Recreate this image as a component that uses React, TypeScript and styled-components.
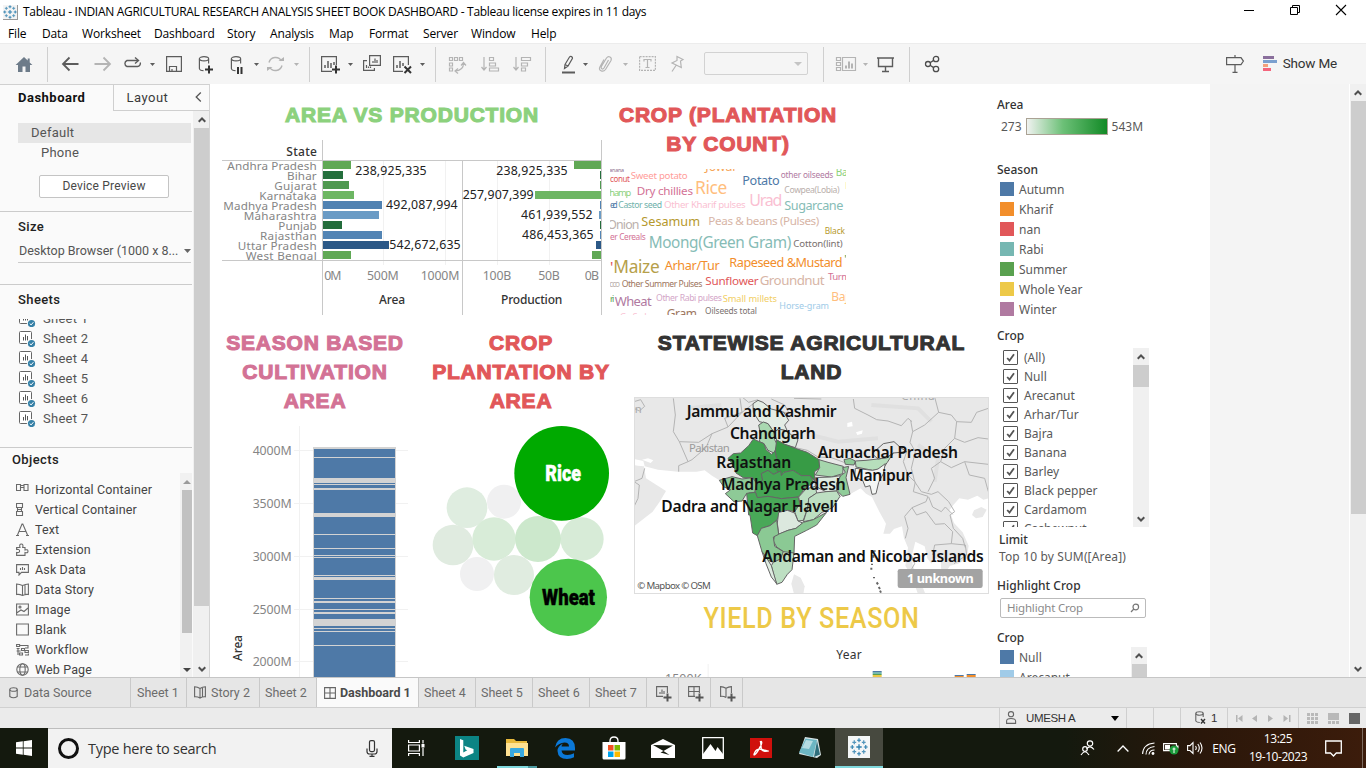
import React from "react";
import styled, { createGlobalStyle } from "styled-components";

const UI = '"Open Sans", "Noto Sans", sans-serif';
const BOOK = 'Roboto, "Liberation Sans", sans-serif';
const CHART = '"Noto Sans", "Open Sans", sans-serif';

const Global = createGlobalStyle`
  * { box-sizing: border-box; }
  body { margin: 0; background: #fff; overflow: hidden; }
  svg { display: block; flex: none; }
`;

const Window = styled.div`
  width: 1366px;
  height: 768px;
  display: flex;
  flex-direction: column;
  overflow: hidden;
  font-family: ${UI};
  font-size: 12px;
  color: #000;
  white-space: nowrap;
`;

/* ---------- title bar and menu ---------- */

const TitleBar = styled.header`
  height: 24px;
  display: flex;
  align-items: center;
  padding-left: 3px;
`;
const AppIcon = styled.div`
  width: 15px;
  height: 15px;
  margin-right: 5px;
  background: #f4f4f4;
  border-right: 1px solid #999;
  border-bottom: 1px solid #999;
`;
const TitleText = styled.div`
  flex: 1;
  line-height: 16px;
  letter-spacing: -0.29px;
`;
const Caption = styled.div`
  display: flex;
  gap: 34px;
  padding-right: 19px;
  margin-top: -4px;
`;
const MenuBar = styled.nav`
  height: 19px;
  padding-left: 8px;
  display: flex;
`;
const MenuItem = styled.span<{ $w: number }>`
  width: ${(p) => p.$w}px;
  line-height: 20px;
  letter-spacing: -0.15px;
`;

/* ---------- toolbar ---------- */

const ToolbarBox = styled.div`
  height: 41px;
  flex: none;
  display: flex;
  align-items: flex-start;
  background: #f5f5f5;
  border-top: 1px solid #ececec;
  padding-top: 10px;
`;
const Tool = styled.div<{ $gap: number; $w: number; $dim?: boolean }>`
  margin-left: ${(p) => p.$gap}px;
  width: ${(p) => p.$w}px;
  height: 20px;
  flex: none;
  color: ${(p) => (p.$dim ? "#b4b4b4" : "#5c5c5c")};
  svg { overflow: visible; fill: none; stroke: currentColor; stroke-width: 1.2; }
`;
const Separator = styled.div<{ $gap: number }>`
  width: 1px;
  height: 35px;
  margin: -7px 0 0 ${(p) => p.$gap}px;
  background: #cfcfcf;
  flex: none;
`;
const CaretDown = styled.i<{ $gap: number; $dim?: boolean }>`
  width: 5px;
  height: 3px;
  margin: 9px 0 0 ${(p) => p.$gap}px;
  background: ${(p) => (p.$dim ? "#b4b4b4" : "#5c5c5c")};
  clip-path: polygon(0 0, 100% 0, 50% 100%);
  flex: none;
`;
const FitSelect = styled.div`
  width: 104px;
  height: 23px;
  margin: -2px 0 0 20px;
  border: 1px solid #d2d2d2;
  border-radius: 2px;
  display: flex;
  justify-content: flex-end;
  padding: 9px 5px 0 0;
  flex: none;
`;
const SelectCaret = styled.i`
  width: 8px;
  height: 4px;
  background: #c4c4c4;
  clip-path: polygon(0 0, 100% 0, 50% 100%);
`;
const Filler = styled.div`flex: 1;`;
const ShowMe = styled.div`
  display: flex;
  gap: 6px;
  margin: 0 29px 0 19px;
  font: 400 13.5px/19px ${BOOK};
  letter-spacing: -0.2px;
  color: #333;
`;

/* ---------- main area ---------- */

const Main = styled.main`
  height: 593px;
  flex: none;
  display: flex;
  overflow: hidden;
`;
const Sidebar = styled.aside`
  width: 210px;
  flex: none;
  display: flex;
  flex-direction: column;
  background: #fafafa;
  border-top: 1px solid #d0d0d0;
  border-right: 1px solid #d4d4d4;
  font-family: ${BOOK};
  color: #555;
`;
const PaneTabs = styled.div`
  height: 26px;
  flex: none;
  display: flex;
`;
const PaneTab = styled.div<{ $active?: boolean }>`
  width: ${(p) => (p.$active ? 114 : 96)}px;
  padding-left: ${(p) => (p.$active ? 18 : 12)}px;
  border-left: ${(p) => (p.$active ? 0 : 1)}px solid #cfcfcf;
  border-bottom: ${(p) => (p.$active ? 0 : 1)}px solid #cfcfcf;
  font-size: 13px;
  line-height: 25px;
  letter-spacing: 0.5px;
  font-weight: ${(p) => (p.$active ? 700 : 400)};
  color: ${(p) => (p.$active ? "#111" : "#3a3a3a")};
  display: flex;
  justify-content: space-between;
  padding-right: 7px;
`;
const PaneBody = styled.div`
  flex: 1;
  min-height: 0;
  display: flex;
  justify-content: space-between;
`;
const PaneContent = styled.div`
  width: 192px;
  height: 566px;
  overflow: hidden;
`;
const Section = styled.section<{ $h: number; $pad?: number }>`
  height: ${(p) => p.$h}px;
  padding-top: ${(p) => p.$pad || 0}px;
  border-bottom: 1px solid #cbcbcb;
  overflow: hidden;
`;
const DeviceRow = styled.div<{ $selected?: boolean }>`
  height: 20px;
  margin: 0 1px 0 18px;
  padding-left: ${(p) => (p.$selected ? 13 : 23)}px;
  font-size: 13px;
  line-height: 20px;
  letter-spacing: 0.25px;
  background: ${(p) => (p.$selected ? "#e6e6e6" : "none")};
`;
const PreviewButton = styled.button`
  display: block;
  width: 130px;
  height: 23px;
  margin: 12px 0 0 39px;
  padding: 0;
  background: #fff;
  border: 1px solid #c4c4c4;
  border-radius: 2px;
  font: 400 12px/19px ${BOOK};
  letter-spacing: 0.2px;
  color: #484848;
`;
const PaneHeading = styled.h3<{ $x: number; $top: number }>`
  margin: 0;
  padding: ${(p) => p.$top}px 0 0 ${(p) => p.$x}px;
  font: 500 13px/18px ${BOOK};
  letter-spacing: 0.4px;
  color: #222;
`;
const SizeSelect = styled.div`
  height: 22px;
  margin: 5px 1px 0 18px;
  padding-left: 1px;
  border-bottom: 1px solid #cbcbcb;
  display: flex;
  font-size: 12.5px;
  line-height: 20px;
`;
const SizeCaret = styled.i`
  width: 7px;
  height: 4px;
  margin: 8px 0 0 auto;
  background: #666;
  clip-path: polygon(0 0, 100% 0, 50% 100%);
`;
const ScrollList = styled.div<{ $h: number; $shift: number }>`
  height: ${(p) => p.$h}px;
  margin-top: 10px;
  overflow: hidden;
  & > :first-child { margin-top: -${(p) => p.$shift}px; }
`;
const SheetRow = styled.div`
  height: 20px;
  padding-left: 19px;
  display: flex;
  gap: 7px;
  font-size: 13px;
  line-height: 20px;
  letter-spacing: 0.25px;
`;
const ObjectsArea = styled.div`
  display: flex;
  justify-content: space-between;
  height: 205px;
  margin-top: 4px;
`;
const ObjectList = styled.div`padding-top: 6px;`;
const ObjectRow = styled.div`
  height: 20px;
  display: flex;
  gap: 6px;
  padding-left: 16px;
  align-items: center;
  font-size: 12.5px;
  letter-spacing: 0.14px;
  color: #444;
  svg { fill: none; stroke: #6a6a6a; stroke-width: 1.1; }
`;
const Track = styled.div<{ $w: number; $h?: number; $bg?: string }>`
  width: ${(p) => p.$w}px;
  height: ${(p) => (p.$h ? p.$h + "px" : "auto")};
  background: ${(p) => p.$bg || "#f1f1f1"};
  display: flex;
  flex-direction: column;
  align-items: flex-end;
  flex: none;
`;
const Thumb = styled.div<{ $w: number; $h: number; $c?: string }>`
  width: ${(p) => p.$w}px;
  height: ${(p) => p.$h}px;
  background: ${(p) => p.$c || "#cdcdcd"};
`;
const ArrowBox = styled.div<{ $w: number; $h: number; $bottom?: boolean }>`
  width: ${(p) => p.$w}px;
  height: ${(p) => p.$h}px;
  margin-top: ${(p) => (p.$bottom ? "auto" : 0)};
  display: flex;
  align-items: center;
  justify-content: center;
`;

/* ---------- dashboard ---------- */

const Canvas = styled.div`
  width: 1000px;
  flex: none;
  background: #fff;
  display: flex;
`;
const Zones = styled.div`
  width: 779px;
  padding-left: 12px;
  flex: none;
`;
const ZoneRow = styled.div<{ $top: number; $gap: number; $h: number }>`
  display: flex;
  gap: ${(p) => p.$gap}px;
  padding-top: ${(p) => p.$top}px;
  height: ${(p) => p.$h}px;
`;
const Zone = styled.section<{ $w: number; $lead?: number }>`
  width: ${(p) => p.$w}px;
  flex: none;
  svg { margin-top: ${(p) => p.$lead ?? 11}px; }
`;
const ZoneTitle = styled.h2<{ $c: string }>`
  margin: 0 -10px;
  text-align: center;
  font: 700 21px/29px "Liberation Sans", Arial, sans-serif;
  letter-spacing: 0.8px;
  -webkit-text-stroke: 1.1px ${(p) => p.$c};
  color: ${(p) => p.$c};
`;
const YieldTitle = styled.h2`
  margin: 9px 0 0;
  text-align: center;
  font: 500 29px/31px Roboto, sans-serif;
  letter-spacing: 0.7px;
  color: #edc948;
  transform: scaleX(0.87);
`;
const Legend = styled.aside`
  width: 153px;
  margin-left: 8px;
  font-family: ${CHART};
  font-size: 12px;
  color: #595959;
`;
const LegendHeading = styled.h4<{ $top: number; $x?: number }>`
  margin: ${(p) => p.$top}px 0 0 ${(p) => p.$x || 0}px;
  font: 500 12px/16px ${CHART};
  color: #333;
`;
const Ramp = styled.div`
  display: flex;
  gap: 4px;
  height: 17px;
  margin: 5px 0 0 4px;
  line-height: 17px;
`;
const RampBar = styled.div`
  width: 82px;
  border: 1px solid #aaa294;
  background: linear-gradient(90deg, #f0f2f0, #6cc077 45%, #128a26);
`;
const SwatchRow = styled.div`
  height: 20px;
  display: flex;
  gap: 5px;
  padding: 3px 0 0 3px;
  line-height: 16px;
`;
const Swatch = styled.i<{ $c: string }>`
  width: 14px;
  height: 14px;
  background: ${(p) => p.$c};
`;
const FilterBox = styled.div<{ $h: number; $top: number; $w: number }>`
  width: ${(p) => p.$w}px;
  height: ${(p) => p.$h}px;
  margin-top: ${(p) => p.$top}px;
  display: flex;
  justify-content: space-between;
  overflow: hidden;
`;
const FilterList = styled.div``;
const CheckRow = styled.label`
  display: flex;
  height: 19px;
  gap: 6px;
  padding: 2px 0 0 6px;
  line-height: 16px;
`;
const CheckBox = styled.i`
  width: 15px;
  height: 15px;
  border: 1px solid #555;
  border-radius: 1px;
`;
const LimitText = styled.div`
  margin: 1px 0 0 2px;
  line-height: 16px;
  letter-spacing: 0.14px;
`;
const SearchField = styled.div`
  width: 146px;
  height: 20px;
  margin: 4px 0 0 3px;
  padding: 0 5px 0 6px;
  border: 1px solid #bbb;
  border-radius: 2px;
  display: flex;
  align-items: center;
  justify-content: space-between;
  font: 400 11.5px/18px ${CHART};
  color: #8a8a8a;
  letter-spacing: -0.2px;
`;
const Beyond = styled.div`
  flex: 1;
  background: #f4f4f4;
  border-right: 1px solid #fff;
`;

/* ---------- sheet tabs and status ---------- */

const SheetTabs = styled.div`
  height: 31px;
  flex: none;
  display: flex;
  background: #e6e6e6;
  border-top: 1px solid #c6c6c6;
  border-bottom: 1px solid #d0d0d0;
`;
const SheetTab = styled.div<{ $w: number; $pad: number; $active?: boolean }>`
  width: ${(p) => p.$w}px;
  padding-left: ${(p) => p.$pad}px;
  border-right: 1px solid #c9c9c9;
  background: ${(p) => (p.$active ? "#fafafa" : "none")};
  font: ${(p) => (p.$active ? 700 : 400)} 12.5px/29px ${BOOK};
  color: ${(p) => (p.$active ? "#4a4a4a" : "#6c6c6c")};
  display: flex;
  gap: ${(p) => (p.$active ? 4 : 5)}px;
  align-items: center;
  svg { overflow: visible; fill: none; stroke: #666; stroke-width: 1.1; }
`;
const StatusBar = styled.div`
  height: 20px;
  flex: none;
  display: flex;
  justify-content: flex-end;
  background: #ebebeb;
`;
const StatusCell = styled.div<{ $w: number; $pad?: number }>`
  width: ${(p) => p.$w}px;
  padding-left: ${(p) => p.$pad || 0}px;
  border-left: 1px solid #cfcfcf;
  display: flex;
  align-items: center;
  font: 400 11.5px/20px "Liberation Sans", sans-serif;
  letter-spacing: -0.35px;
  color: #333;
`;
const StatusCaret = styled.i`
  border: 4px solid transparent;
  border-top: 5px solid #000;
  border-bottom: 0;
  margin: 1px 0 0 36px;
`;

/* ---------- taskbar ---------- */

const Taskbar = styled.footer`
  height: 40px;
  flex: none;
  display: flex;
  background: linear-gradient(90deg, #14190e 0, #14190e 78%, #2a170a 88%, #3c1c0b 100%);
  color: #fff;
`;
const StartButton = styled.div`
  width: 48px;
  display: flex;
  align-items: center;
  justify-content: center;
`;
const SearchBox = styled.div`
  width: 344px;
  background: #f2f2f2;
  border-top: 1px solid #bdbdbd;
  display: flex;
  align-items: center;
  padding: 0 14px 0 10px;
  font: 400 14.5px/38px ${UI};
  letter-spacing: -0.27px;
  color: #333;
`;
const SearchRing = styled.i`
  width: 21px;
  height: 21px;
  border: 3px solid #111;
  border-radius: 50%;
  margin: 0 9px 0 0;
`;
const TaskButton = styled.div<{ $w: number; $active?: boolean }>`
  width: ${(p) => p.$w}px;
  display: flex;
  align-items: center;
  justify-content: center;
  background: ${(p) => (p.$active ? "#47493f" : "none")};
  border-bottom: ${(p) => (p.$active ? "2px solid #7fd8dc" : "0")};
`;
const RunningButton = styled(TaskButton)`
  background: linear-gradient(90deg, #7fd8dc 31px, #4c9aa0 31px) 3px 38px / 40px 2px no-repeat;
`;
const Tray = styled.div`
  margin-left: auto;
  display: flex;
  align-items: center;
`;
const TrayItem = styled.div<{ $w: number }>`
  width: ${(p) => p.$w}px;
  display: flex;
  justify-content: center;
`;
const Lang = styled.div`
  width: 28px;
  font-size: 12px;
  text-align: center;
  letter-spacing: -0.3px;
`;
const Clock = styled.div`
  width: 80px;
  text-align: center;
  font-size: 12px;
  line-height: 18px;
  letter-spacing: -0.45px;
`;
const PeekEdge = styled.div`
  width: 4px;
  height: 40px;
  border-left: 1px solid #7c6a5f;
`;

/* ---------- small drawings ---------- */

type Plus = [number, number, number, number];
const pluses: Plus[] = [
  [8, 8, 2.4, 1.2], [8, 2, 1.7, 1], [8, 14, 1.7, 1], [2, 8, 1.7, 1], [14, 8, 1.7, 1],
  [3.8, 3.8, 1.7, 1.1], [12.2, 3.8, 1.7, 1.1], [3.8, 12.2, 1.7, 1.1], [12.2, 12.2, 1.7, 1.1],
];
const TableauMark = ({ size, color }: { size: number; color: string }) => (
  <svg width={size} height={size} viewBox="0 0 16 16" stroke={color}>
    {pluses.map(([x, y, r, w], i) => (
      <path key={i} strokeWidth={w} opacity={i > 4 ? 0.8 : 1} d={`M${x - r} ${y}H${x + r}M${x} ${y - r}V${y + r}`} />
    ))}
  </svg>
);

const Chevron = ({ dir, size = 9 }: { dir: "up" | "down"; size?: number }) => (
  <svg width={size} height={size} viewBox="0 0 9 9" fill="none" stroke="#505050" strokeWidth="2.2">
    <path d={dir === "up" ? "M.8 6.500 4.500 2.800 8.200 6.500" : "M.8 2.500 4.500 6.200 8.200 2.500"} />
  </svg>
);

const SheetIcon = () => (
  <svg width="17" height="18" viewBox="0 0 17 18">
    <rect x=".5" y="2.5" width="12" height="12" rx="1" fill="#fff" stroke="#666" />
    <path d="M4.500 11.500V8M6.500 11.500V5.500M8.500 11.500V7" stroke="#555" />
    <circle cx="12.500" cy="14.500" r="4.600" fill="#fafafa" />
    <circle cx="12.500" cy="14.500" r="3.600" fill="#3580a6" />
    <path d="m10.700 14.500 1.400 1.400 2.300-2.700" fill="none" stroke="#fff" />
  </svg>
);

const Svg = ({ w, h = 20, children }: { w: number; h?: number; children: React.ReactNode }) => (
  <svg width={w} height={h} viewBox={`0 0 ${w} ${h}`}>{children}</svg>
);

const Cylinder = () => (
  <>
    <ellipse cx="6" cy="4.700" rx="4.600" ry="2.100" />
    <path d="M1.400 4.700V14.500Q1.600 16.500 5.500 16.700M10.600 4.700V9.500" />
  </>
);

const Toolbar = () => (
  <ToolbarBox>
    <Tool $gap={15} $w={18}>
      <Svg w={18}><path fill="#6d7b89" stroke="none" d="M9 3 .6 11H3v7h4.500v-5.500h3V18H15v-7h2.400l-2.700-2.600V4.500h-2v2z" /></Svg>
    </Tool>
    <Separator $gap={14} />
    <Tool $gap={14} $w={17}><Svg w={17}><path strokeWidth="1.800" d="M7.500 3.500 1 10l6.500 6.500M1 10h15.500" /></Svg></Tool>
    <Tool $gap={15} $w={17} $dim><Svg w={17}><path strokeWidth="1.800" d="M9.500 3.500 16 10l-6.500 6.500M16 10H.5" /></Svg></Tool>
    <Tool $gap={12} $w={18}>
      <Svg w={18}><path strokeWidth="1.400" d="M15 6.500H4A3.200 3.200 0 0 0 4 12.500H14.500A3 3 0 0 0 17.200 8.500" /><path d="m12 3.500 3.500 3-3.500 3" strokeWidth="1.400" /></Svg>
    </Tool>
    <CaretDown $gap={9} />
    <Tool $gap={11} $w={16}><Svg w={16}><path d="M.6 2.600H15.400V17.400H.6zM3.500 17.400V12.500H10.500V17.400M6 17.400V15" /></Svg></Tool>
    <Tool $gap={16} $w={15}><Svg w={15}><Cylinder /><path d="M11 11.500v8M7 15.500h8" strokeWidth="2" stroke="#333" /></Svg></Tool>
    <Tool $gap={17} $w={13}><Svg w={13}><Cylinder /><path d="M8 13v7M11.500 13v7" strokeWidth="2" stroke="#333" /></Svg></Tool>
    <CaretDown $gap={11} />
    <Tool $gap={8} $w={17} $dim>
      <Svg w={17}><path strokeWidth="1.400" d="M2 8.500A6.800 6.800 0 0 1 14.500 7M15 11.500A6.800 6.800 0 0 1 2.500 13" /><path fill="currentColor" stroke="none" d="M11.500 7h5.500V3zM5.500 13H0v4z" /></Svg>
    </Tool>
    <CaretDown $gap={10} $dim />
    <Separator $gap={10} />
    <Tool $gap={11} $w={19}>
      <Svg w={19}><path d="M11 17.400H.6V2.600H15.400V11" /><path strokeWidth="1.500" d="M4 14v-3M7 14V7M10 14V9M13 11V8" /><path d="M15 11.500v8M11 15.500h8" strokeWidth="2" stroke="#333" /></Svg>
    </Tool>
    <CaretDown $gap={8} />
    <Tool $gap={10} $w={18}>
      <Svg w={18}><path d="M6.600 1.600H17.400V11.400H6.600zM4 6.600H.6V16.400H11.400V14M10 9V7M12 9V4.500M14 9V6M3.500 14v-3M5.500 14v-1.500M7.500 14v-1.500" /></Svg>
    </Tool>
    <Tool $gap={12} $w={19}>
      <Svg w={19}><path d="M10 17.400H.6V2.600H15.400V11" /><path strokeWidth="1.500" d="M4 14v-3M7 14V7M10 12V9" /><path d="m11.500 12.500 6.500 6.500M18 12.500l-6.500 6.500" strokeWidth="2" stroke="#333" /></Svg>
    </Tool>
    <CaretDown $gap={8} />
    <Separator $gap={10} />
    <Tool $gap={13} $w={16} $dim>
      <Svg w={16}><path d="M.5 3.500h3v3h-3zM5.500 3.500h3v3h-3zM10.500 3.500h3v3h-3zM.5 9h3v3h-3zM.5 14h3v3h-3zM14.500 9.500q0 7-8.500 7.500M12 11.500l2.500-3 2.500 3M9 14.500l-3 2.500 3 2.500" /></Svg>
    </Tool>
    <Tool $gap={16} $w={18} $dim><Svg w={18}><path d="M3 3v13M.5 13 3 16l2.500-3M8.500 3.500h4v3h-4zM8.500 9h6v3h-6zM8.500 14h9v3h-9z" /></Svg></Tool>
    <Tool $gap={14} $w={18} $dim><Svg w={18}><path d="M3 3v13M.5 13 3 16l2.500-3M8.500 3.500h9v3h-9zM8.500 9h6v3h-6zM8.500 14h4v3h-4z" /></Svg></Tool>
    <Separator $gap={14} />
    <Tool $gap={16} $w={13}>
      <Svg w={13}><path d="M3 10.500 7.500 3q.8-1 2-.4t1 1.800L6 12l-3.500 2.500zM3 10.500 6 12" /><path d="M0 18.500h13" strokeWidth="2" /></Svg>
    </Tool>
    <CaretDown $gap={8} />
    <Tool $gap={11} $w={13} $dim>
      <Svg w={13}><path d="M9.500 6 5 14q-1 1.500-2.200.8t-.4-2.300L7.500 4q1.500-2 3.500-1t1 3.500L6.500 15.500q-2 2.500-4.500 1.200t-1-4L5 5.500" /></Svg>
    </Tool>
    <CaretDown $gap={11} $dim />
    <Tool $gap={11} $w={17} $dim>
      <Svg w={17}><path strokeDasharray="2 1" d="M.6 2.600H16.400V16.400H.6z" /><path d="M5 7.500v-2h7v2M8.500 5.500v8M6.500 13.500h4" /></Svg>
    </Tool>
    <Tool $gap={15} $w={13} $dim>
      <Svg w={13}><path d="M6 2.500 12 5.500 9.500 7l.8 6.500L1 9l5-2.500zM5 11.500l-4 6" /></Svg>
    </Tool>
    <FitSelect><SelectCaret /></FitSelect>
    <Separator $gap={15} />
    <Tool $gap={12} $w={20} $dim>
      <Svg w={20}><path d="M.5 3.500h4v3h-4zM.5 8.500h4v3h-4zM.5 13.500h4v3h-4zM6.500 3.500h13v13h-13z" /><path d="M10 14.500v-3M13 14.500v-7M16 14.500v-5" strokeWidth="2" /></Svg>
    </Tool>
    <CaretDown $gap={7} $dim />
    <Tool $gap={9} $w={17}><Svg w={17}><path strokeWidth="1.400" d="M0 4h17M1.500 4v8.500h14V4M8.500 12.500v5M5 17.500h7" /></Svg></Tool>
    <Separator $gap={15} />
    <Tool $gap={15} $w={15}>
      <Svg w={15}><g strokeWidth="1.300" stroke="#4c4c4c"><circle cx="3" cy="10" r="2.500" /><circle cx="11" cy="5" r="2.700" /><circle cx="11" cy="15" r="2.700" /><path d="m5 8.700 3.700-2.300M5 11.300l3.700 2.300" /></g></Svg>
    </Tool>
    <Filler />
    <Tool $gap={0} $w={18}>
      <Svg w={18}><path d="M.6 3.600H15l2.400 3.500L15 10.600H.6zM9 1v2.500M9 10.500V18M6.500 18.400h5" /></Svg>
    </Tool>
    <ShowMe>
      <Svg w={14}><path fill="#8a6f9c" d="M0 2h11v3H0z" /><path fill="#7ba0cf" d="M0 6h14v3H0z" /><path fill="#f3a17c" d="M0 10h5v3H0z" /><path fill="#f4657c" d="M0 14h8v3H0z" /></Svg>
      Show Me
    </ShowMe>
  </ToolbarBox>
);

/* ---------- sidebar ---------- */

const objects: [string, React.ReactNode][] = [
  ["Horizontal Container", <path d="M.5 1.500h4v6h-4zM8 1.500h4v6H8zM4.500 2.500h3.500M4.500 4.500h3.500" />],
  ["Vertical Container", <path d="M.5.500h6v4h-6zM.5 8.500h6v4h-6zM1.500 4.500v4M5.500 4.500v4M1.500 6.500h4" />],
  ["Text", <path d="M1.500 12 6 1h.8L11.500 12M3 8.500h7M0 12.500h3M10 12.500h3" />],
  ["Extension", <path d="M.6 12.400V9.500q3 .5 3-1.500t-3-1.500V4.500H4Q3 1 5.300 1T6.700 4.500H9V7q3-1 3 1.200T9 9.500v2.900z" />],
  ["Ask Data", <><path d="M.6 1.600H12.400V9.400H5.500L3 12V9.400H.6z" /><path d="M4.500 7V5M6.500 7V4M8.500 7V5" /></>],
  ["Data Story", <path d="M.6 1q3 .2 5.900 1.500Q9.500 1.200 12.400 1v10.500Q9.500 11 6.500 12.500 3.500 11 .6 11.500zM6.500 2.500v10M9 2v9.500" />],
  ["Image", <><path d="M.6 1H12.400V12H.6zM.6 10 5 7l3 1.500L12 5" /><circle cx="4" cy="4" r="1" /></>],
  ["Blank", <path d="M.6 1H12.400V12H.6z" />],
  ["Workflow", <path d="M.6 1.500h3v2h-3zM4 2.500h8v2.500h-3M5.500 5.500h3v2h-3zM.6 8h4M9 7.500h3.400v2H9zM2 6v6M3.500 10h3v2h-3zM.6 5.500h3M9 12h3.400v-1.500" />],
  ["Web Page", <><circle cx="6.500" cy="6.500" r="5.700" /><ellipse cx="6.500" cy="6.500" rx="2.700" ry="5.700" /><path d="M1.500 4h10M1.500 9h10" /></>],
];

const SidePane = () => (
  <Sidebar>
    <PaneTabs>
      <PaneTab $active>Dashboard</PaneTab>
      <PaneTab>
        Layout
        <svg width="7" height="24" viewBox="0 0 7 24" fill="none" stroke="#555" strokeWidth="1.300"><path d="M5.800 7.500 1.200 12l4.600 4.500" /></svg>
      </PaneTab>
    </PaneTabs>
    <PaneBody>
      <PaneContent>
        <Section $h={101} $pad={12}>
          <DeviceRow $selected>Default</DeviceRow>
          <DeviceRow>Phone</DeviceRow>
          <PreviewButton>Device Preview</PreviewButton>
        </Section>
        <Section $h={73} $pad={6}>
          <PaneHeading $x={18} $top={0}>Size</PaneHeading>
          <SizeSelect>Desktop Browser (1000 x 8...<SizeCaret /></SizeSelect>
        </Section>
        <Section $h={163} $pad={6}>
          <PaneHeading $x={18} $top={0}>Sheets</PaneHeading>
          <ScrollList $h={120} $shift={10}>
            {["Sheet 1", "Sheet 2", "Sheet 4", "Sheet 5", "Sheet 6", "Sheet 7"].map((s) => (
              <SheetRow key={s}><SheetIcon />{s}</SheetRow>
            ))}
          </ScrollList>
        </Section>
        <PaneHeading $x={12} $top={3}>Objects</PaneHeading>
        <ObjectsArea>
          <ObjectList>
            {objects.map(([name, icon]) => (
              <ObjectRow key={name}><svg width="13" height="13" viewBox="0 0 13 13">{icon}</svg>{name}</ObjectRow>
            ))}
          </ObjectList>
          <Track $w={12}>
            <ArrowBox $w={10} $h={17}><svg width="8" height="4"><path d="M0 4 4 0l4 4z" fill="#9a9a9a" /></svg></ArrowBox>
            <Thumb $w={10} $h={143} $c="#c1c1c1" />
            <ArrowBox $w={10} $h={17} $bottom><svg width="8" height="4"><path d="M0 0h8L4 4z" fill="#444" /></svg></ArrowBox>
          </Track>
        </ObjectsArea>
      </PaneContent>
      <Track $w={16} $bg="#f0f0f0">
        <ArrowBox $w={15} $h={17}><Chevron dir="up" size={8} /></ArrowBox>
        <Thumb $w={15} $h={478} />
        <ArrowBox $w={15} $h={16} $bottom><Chevron dir="down" size={8} /></ArrowBox>
      </Track>
    </PaneBody>
  </Sidebar>
);

/* ---------- charts ---------- */

/* Chart coordinates use three units per pixel. */
interface TProps {
  x1: number; x2: number; y: number; size: number; c: string; w?: number; font?: string; squeeze?: boolean; children: string;
}
const T = ({ x1, x2, y, size, c, w = 400, font = CHART, squeeze, children }: TProps) => (
  <text x={x1} y={y} fontSize={size} fill={c} fontWeight={w} fontFamily={font}
    textLength={x2 - x1} lengthAdjust={squeeze ? "spacingAndGlyphs" : "spacing"}>{children}</text>
);

const states: [string, number, number, string, number, number][] = [
  ["Andhra Pradesh", 37, 408, "#60a855", 1077, 236],
  ["Bihar", 216, 384, "#246e3c", 1155, 267],
  ["Gujarat", 178, 402, "#4f9950", 1155, 297],
  ["Karnataka", 133, 417, "#6db663", 960, 327],
  ["Madhya Pradesh", 25, 501, "#5082b2", 1155, 357],
  ["Maharashtra", 86, 492, "#6a9bc5", 1152, 387],
  ["Punjab", 190, 381, "#236c3b", 1155, 417],
  ["Rajasthan", 135, 501, "#5284b4", 1155, 447],
  ["Uttar Pradesh", 68, 522, "#2b5886", 1143, 477],
  ["West Bengal", 92, 408, "#60a855", 1131, 507],
];
const marks: [string, number, number, number][] = [
  ["238,925,335", 421, 635, 255], ["492,087,994", 513, 728, 358], ["542,672,635", 523, 737, 478],
  ["238,925,335", 844, 1058, 255], ["257,907,399", 743, 956, 328], ["461,939,552", 918, 1133, 387], ["486,453,365", 921, 1136, 447],
];
const AreaProduction = () => (
  <svg width="380" height="175" viewBox="21 150 1140 525">
    <path fill="#f1f1f1" d="M504 213h3v312h-3zM690 213h3v312h-3zM846 213h3v312h-3zM1002 213h3v312h-3z" />
    <T x1={214} x2={306} y={198} size={36} c="#333" w={500}>State</T>
    <defs><clipPath id="rows"><rect x="21" y="213" width="300" height="297" /></clipPath></defs>
    {states.map(([name, x, end, color, start, y], i) => (
      <g key={name}>
        <g clipPath="url(#rows)"><T x1={x} x2={305} y={y + 4} size={35} c="#858585">{name}</T></g>
        <rect x="324" y={213 + i * 30} width={end - 324} height="24" fill={color} />
        <rect x={start} y={213 + i * 30} width={1158 - start} height="24" fill={color} />
      </g>
    ))}
    <path fill="#c8c8c8" d="M21 210h1140v3H21zM21 510h1140v3H21zM321 150h3v525h-3zM741 210h3v465h-3zM1158 150h3v525h-3z" />
    {marks.map(([t, a, b, y]) => <T key={a} x1={a} x2={b} y={y} size={37} c="#222">{t}</T>)}
    <T x1={328} x2={379} y={570} size={37} c="#858585">0M</T>
    <T x1={456} x2={551} y={570} size={37} c="#858585">500M</T>
    <T x1={617} x2={733} y={570} size={37} c="#858585">1000M</T>
    <T x1={803} x2={889} y={570} size={37} c="#858585">100B</T>
    <T x1={970} x2={1034} y={570} size={37} c="#858585">50B</T>
    <T x1={1109} x2={1152} y={570} size={37} c="#858585">0B</T>
    <T x1={492} x2={570} y={642} size={36} c="#333" w={500}>Area</T>
    <T x1={858} x2={1042} y={642} size={36} c="#333" w={500}>Production</T>
  </svg>
);

const words: [string, number, number, number, number, string][] = [
  ["Banana", 18, 72, 246, 16, "#8c6d8c"], ["Jowar", 316, 412, 243, 37, "#f6a558"], ["conut", 30, 90, 275, 24, "#e15759"],
  ["Sweet potato", 92, 263, 267, 29, "#ff9d9a"], ["Potato", 427, 539, 285, 38, "#4e79a7"], ["other oilseeds", 542, 700, 263, 25, "#b07aa1"],
  ["Bar", 707, 755, 258, 30, "#8cd17d"], ["champ", 18, 94, 317, 28, "#8cd17d"], ["Dry chillies", 110, 279, 315, 35, "#d37295"],
  ["Rice", 285, 382, 312, 52, "#ffbe7d"], ["Cowpea(Lobia)", 553, 719, 308, 26, "#bab0ac"], ["l", 736, 742, 298, 28, "#f1ce63"],
  ["ed", 30, 53, 355, 25, "#4e79a7"], ["Castor seed", 55, 186, 353, 26, "#6fb1ab"], ["Other Kharif pulses", 192, 437, 354, 29, "#fabfd2"],
  ["Urad", 448, 547, 349, 48, "#fabfd2"], ["Sugarcane", 553, 730, 360, 38, "#86bcb6"], ["Onion", 22, 118, 417, 37, "#bab0ac"],
  ["Sesamum", 124, 300, 408, 38, "#b6992d"], ["Peas & beans (Pulses)", 325, 658, 406, 35, "#d7b5a6"], ["Black", 674, 735, 431, 25, "#b6992d"],
  ["er Cereals", 30, 137, 451, 25, "#d37295"], ["Moong(Green Gram)", 146, 574, 474, 46, "#86bcb6"], ["Cotton(lint)", 580, 728, 472, 29, "#79706e"],
  ["'", 30, 38, 545, 45, "#e15759"], ["Maize", 40, 179, 549, 52, "#b6a04a"], ["Arhar/Tur", 194, 359, 539, 38, "#f28e2b"],
  ["Rapeseed &Mustard", 388, 728, 530, 38, "#f28e2b"], ["'", 733, 740, 518, 34, "#59a14f"], ["cco", 28, 60, 592, 25, "#bab0ac"], ["Other Summer Pulses", 65, 307, 592, 26, "#9d7660"],
  ["Sunflower", 316, 476, 585, 35, "#e15759"], ["Groundnut", 479, 674, 586, 40, "#d7b5a6"], ["Turmeric", 684, 794, 570, 29, "#d37295"],
  ["ri", 30, 43, 636, 26, "#59a14f"], ["Wheat", 44, 155, 648, 39, "#b07aa1"], ["Other Rabi pulses", 168, 366, 633, 26, "#d4a6c8"],
  ["Small millets", 368, 531, 635, 28, "#f1ce63"], ["Horse-gram", 538, 687, 656, 27, "#a0cbe8"], ["Bajra", 694, 777, 633, 36, "#ffbe7d"],
  ["Guar Seed", 60, 140, 690, 26, "#fabfd2"], ["Gram", 200, 291, 685, 36, "#9d7660"], ["Oilseeds total", 315, 471, 673, 25, "#79706e"],
];
const WordCloud = () => (
  <svg width="236" height="146" viewBox="30 237 708 438">
    {words.map(([t, a, b, y, s, c]) => <T key={t + a} x1={a} x2={b} y={y} size={s} c={c}>{t}</T>)}
  </svg>
);

const bands = [
  [372, 396], [399, 459], [474, 477], [480, 489], [495, 564], [576, 627], [630, 669], [672, 690], [693, 696], [699, 750],
  [753, 756], [765, 819], [822, 828], [834, 852], [855, 861], [867, 882], [903, 909], [912, 918], [921, 960], [963, 1056],
];
const SeasonArea = () => (
  <svg width="186" height="252" viewBox="21 300 558 756">
    <path fill="#f1f1f1" d="M252 303h3v753h-3zM237 375h342v3H237zM237 534h342v3H237zM237 693h342v3H237zM237 852h342v3H237zM237 1008h342v3H237z" />
    <rect x="294" y="366" width="249" height="690" fill="#d3d3d3" />
    {bands.map(([a, b]) => <rect key={a} x="297" y={a} width="243" height={b - a} fill="#4e79a7" />)}
    {["4000M", "3500M", "3000M", "2500M", "2000M"].map((t, i) => (
      <T key={t} x1={113} x2={230} y={[390, 549, 708, 867, 1022][i]} size={37} c="#858585">{t}</T>
    ))}
    <g transform="translate(81 1008) rotate(-90)"><T x1={0} x2={78} y={0} size={36} c="#333" w={500}>Area</T></g>
  </svg>
);

const bubbles: [number, number, number, string][] = [
  [756, 548, 61, "#dfede0"], [867, 530, 51, "#f0f0f1"], [714, 660, 61, "#e0ebe0"], [837, 642, 65, "#d8ecd8"], [1101, 642, 65, "#d7ebd7"],
  [969, 642, 69, "#cce8cc"], [786, 747, 51, "#f0f0f1"], [897, 750, 60, "#e0ece0"], [1060, 817, 116, "#4cc64c"], [1040, 445, 142, "#00aa00"],
];
const CropBubbles = () => (
  <svg width="190" height="215" viewBox="633 300 570 645">
    {bubbles.map(([x, y, r, c]) => <circle key={x + "-" + y} cx={x} cy={y} r={r} fill={c} />)}
    <g stroke="#fff" strokeWidth="1.200"><T x1={991} x2={1098} y={467} size={66} c="#fff" w={900} font="Roboto, sans-serif" squeeze>Rice</T></g>
    <g stroke="#000" strokeWidth="1.200"><T x1={981} x2={1140} y={839} size={66} c="#000" w={900} font="Roboto, sans-serif" squeeze>Wheat</T></g>
  </svg>
);

const regions: [string, string][] = [
  ["#e3ece4", "385 236 400 226 415 232 440 252 478 262 492 286 480 300 488 318 462 312 448 322 430 296 404 290 386 262"],
  ["#a9d8b0", "402 300 416 291 430 296 448 322 450 344 458 360 448 384 430 376 418 356 404 350 408 330"],
  ["#dbe9dd", "448 322 462 312 488 318 500 330 520 344 512 368 480 358 456 345"],
  ["#40a34f", "386 342 404 350 418 356 424 374 440 388 452 378 456 400 452 430 468 438 446 448 430 436 410 446 414 466 398 476 384 458 356 458 334 444 328 424 310 400 326 386 348 384 372 362"],
  ["#379b45", "456 345 480 358 512 370 548 382 583 404 585 428 570 440 570 468 556 452 530 452 505 436 478 442 470 452 452 430 456 400 452 378"],
  ["#46a655", "468 438 470 452 478 442 505 436 530 452 556 452 568 472 540 490 522 516 470 521 430 514 398 520 392 500 398 476 414 466 410 446 430 436 446 448"],
  ["#8eca97", "284 466 322 455 352 462 384 458 396 476 390 502 372 504 376 530 366 505 352 528 328 530 302 506 318 494 298 486"],
  ["#49a858", "372 570 366 505 392 502 398 518 430 514 470 521 520 516 526 536 512 560 490 556 468 560 456 586 436 602 410 610 398 632 384 624 376 570"],
  ["#a5d6ac", "583 404 610 412 656 424 654 446 620 456 572 450 585 428"],
  ["#dfece1", "572 458 620 456 648 452 636 476 636 498 604 500 572 484"],
  ["#90cc99", "648 452 662 442 654 428 672 424 664 458 676 508 654 514 640 500 636 476"],
  ["#bddfc2", "522 516 544 492 572 484 576 504 552 520 550 546 536 586 520 588 510 560 526 536"],
  ["#bddfc2", "576 504 604 500 636 498 646 514 624 548 592 562 566 584 536 590 550 546 552 520"],
  ["#dce8de", "462 562 488 556 510 564 520 588 534 594 514 610 490 616 462 628 458 594"],
  ["#8bc994", "450 632 490 616 514 610 536 592 566 584 606 562 576 600 546 616 510 634 508 684 486 686 456 666 446 648"],
  ["#8bc994", "398 632 410 610 436 602 456 586 462 628 446 636 450 664 476 680 468 702 446 712 430 706 412 680"],
  ["#bddfc2", "446 712 468 702 476 680 508 684 502 734 488 748 472 772 456 778 448 752 440 722"],
  ["#dfece1", "412 680 430 706 440 722 450 756 456 776 440 756 424 716"],
  ["#8dca96", "658 404 676 400 692 408 688 420 662 418"],
  ["#b7dfbc", "692 408 724 406 760 402 786 398 806 384 788 412 774 432 744 436 694 426"],
  ["none", "742 386 776 356 808 350 828 368 846 380 806 384 786 398 760 402"],
  ["#f4f6f4", "760 432 782 416 776 446 762 472 754 506 742 508 736 482 722 486 714 466 690 456 692 430 744 436"],
];
const borders = [
  "28 230 48 224 60 244 44 258 28 250", "146 220 152 270 146 320 164 350 222 352 262 326 310 306 352 262 386 236",
  "164 350 190 410 162 422 162 440", "310 306 300 280 352 262 346 220", "262 326 244 368 202 404 190 410", "352 216 372 232 400 224",
  "440 222 480 240 494 266 478 262", "508 220 590 222", "686 222 690 250 730 270 756 284 790 288 830 302 850 280 862 290",
  "512 368 548 376 580 396 620 398 658 412", "858 286 864 320 856 352 872 380 860 430 870 470 850 450 836 410 846 380",
  "870 470 890 500 920 508 940 500 972 530 990 560 976 570 986 610 1014 640 1022 668", "872 470 866 500 910 514 904 530 862 548 840 574 850 610 842 640",
  "912 516 924 546 950 560 962 546 984 568", "862 548 876 570 904 560 932 598 960 596 984 620 980 656 930 660 924 690",
  "980 656 1022 660 1026 690 988 716", "930 216 942 262 980 270 996 290 1040 292 1056 262 1091 250", "996 290 990 340 1020 352 1060 338 1091 342",
  "990 340 960 370 948 410 980 428 1020 410 1091 418", "948 410 920 430 930 460 910 500", "1020 410 1034 450 1080 460 1091 500", "864 320 900 300 942 262",
  "28 470 44 480 40 520 28 545", "60 430 52 460 28 470", "860 690 870 716 860 734",
];
const mapLabels: [string, number, number, number][] = [
  ["Jammu and Kashmir", 186, 636, 276], ["Chandigarh", 316, 573, 342], ["Arunachal Pradesh", 579, 1000, 400], ["Rajasthan", 275, 500, 429],
  ["Manipur", 674, 862, 468], ["Madhya Pradesh", 289, 663, 495], ["Dadra and Nagar Haveli", 110, 640, 562], ["Andaman and Nicobar Islands", 413, 1077, 711],
];
const StateMap = () => (
  <svg width="355" height="197" viewBox="28 216 1065 591">
    <rect x="28" y="216" width="1065" height="591" fill="#fff" />
    <g fill="#e8e8e8">
      <path d="M28 216H1093V520L1076 524 1058 512 1030 524 1004 520 986 540 974 556 988 594 1014 622 1032 662 1026 702 1000 716 976 722 962 744 950 740 948 708 932 700 920 716 908 700 900 664 872 650 862 690 864 722 884 760 902 807H880L860 752 842 722 850 668 838 640 832 604 808 612 796 626 776 626 784 596 764 560 742 516 724 506 708 490 676 508 650 514 606 562 546 616 510 634 508 690 502 734 472 772 456 778 440 756 398 632 376 570 370 530 328 530 302 506 318 494 284 466 262 452 240 436 216 440 160 440 100 434 60 424 56 408 28 402z" />
      <path d="M28 420 58 424 64 460 92 478 124 498 104 532 84 560 28 604z" />
      <path d="M508 748 528 758 540 784 536 807H508L500 776z" />
      <path d="M1048 556 1070 546 1086 554 1074 576 1054 580 1042 570z" />
    </g>
    <path fill="#fff" d="M668 294 682 290 684 304 668 306zM694 322 714 316 712 326 698 330zM52 404 70 400 86 406 78 414zM28 404 50 412 56 424 28 420z" />
    <path fill="none" stroke="#e0e0e0" strokeWidth="12" d="M560 330 640 350 760 340M880 360 940 400 930 470M740 240 880 250 920 290M190 250 290 240" />
    <g fill="none" stroke="#b4b4b4" strokeWidth="3">
      {borders.map((p) => <polyline key={p} points={p} />)}
    </g>
    <g stroke="#666" strokeWidth="3" strokeLinejoin="round">
      {regions.map(([c, p]) => <polygon key={p} points={p} fill={c} />)}
    </g>
    <path d="M746 690v8M742 716v4M740 728v6M748 756v4M756 772l4 6M762 786l4 6M766 797l3 6M750 676v4" stroke="#666" strokeWidth="6" />
    <T x1={193} x2={315} y={381} size={34} c="#9a9a9a">Pakistan</T>
    <T x1={830} x2={930} y={225} size={34} c="#aaa">China</T>
    <T x1={30} x2={47} y={265} size={34} c="#aaa">n</T>
    {mapLabels.map(([t, a, b, y]) => <T key={t} x1={a} x2={b} y={y} size={47} c="#111" w={600}>{t}</T>)}
    <rect x="34" y="768" width="230" height="32" fill="#fff" opacity=".7" />
    <T x1={38} x2={258} y={791} size={29} c="#555">© Mapbox © OSM</T>
    <rect x="819" y="732" width="255" height="57" rx="7" fill="#a3a3a3" />
    <T x1={847} x2={1047} y={773} size={38} c="#fff" w={700}>1 unknown</T>
    <rect x="29.500" y="217.500" width="1062" height="588" fill="none" stroke="#dedede" strokeWidth="3" />
  </svg>
);

const YieldChart = () => (
  <svg width="355" height="32" viewBox="28 960 1065 96">
    <T x1={635} x2={711} y={1002} size={36} c="#333">Year</T>
    <T x1={121} x2={230} y={1074} size={37} c="#858585">1500K</T>
    <path fill="#f1f1f1" d="M249 1017h3v39h-3z" />
    <path fill="#4e79a7" d="M744 1038h27v4h-27zM990 1050h27v3h-27zM1026 1047h27v3h-27z" />
    <path fill="#76b7b2" d="M744 1041h27v6h-27z" />
    <path fill="#59a14f" d="M744 1047h27v3h-27z" />
    <path fill="#edc948" d="M744 1050h27v6h-27z" />
    <path fill="#f28e2b" d="M990 1053h27v3h-27zM1026 1050h27v6h-27z" />
  </svg>
);

const seasons: [string, string][] = [
  ["Autumn", "#4e79a7"], ["Kharif", "#f28e2b"], ["nan", "#e15759"], ["Rabi", "#76b7b2"],
  ["Summer", "#59a14f"], ["Whole Year", "#edc948"], ["Winter", "#b07aa1"],
];
const crops = ["(All)", "Null", "Arecanut", "Arhar/Tur", "Bajra", "Banana", "Barley", "Black pepper", "Cardamom", "Cashewnut"];

const LegendPane = () => (
  <Legend>
    <LegendHeading $top={13}>Area</LegendHeading>
    <Ramp>273<RampBar />543M</Ramp>
    <LegendHeading $top={27}>Season</LegendHeading>
    <FilterBox $h={142} $top={1} $w={153}>
      <FilterList>{seasons.map(([n, c]) => <SwatchRow key={n}><Swatch $c={c} />{n}</SwatchRow>)}</FilterList>
    </FilterBox>
    <LegendHeading $top={7}>Crop</LegendHeading>
    <FilterBox $h={179} $top={4} $w={152}>
      <FilterList>
        {crops.map((n) => (
          <CheckRow key={n}>
            <CheckBox><svg width="13" height="13" fill="none" stroke="#555" strokeWidth="1.800"><path d="m3.200 7 2.300 2.600 4.500-6.400" /></svg></CheckBox>
            {n}
          </CheckRow>
        ))}
      </FilterList>
      <Track $w={16} $h={179} $bg="#f0f0f0">
        <ArrowBox $w={16} $h={17}><Chevron dir="up" size={8} /></ArrowBox>
        <Thumb $w={16} $h={22} />
        <ArrowBox $w={16} $h={17} $bottom><Chevron dir="down" size={8} /></ArrowBox>
      </Track>
    </FilterBox>
    <LegendHeading $top={5} $x={2}>Limit</LegendHeading>
    <LimitText>Top 10 by SUM([Area])</LimitText>
    <LegendHeading $top={13}>Highlight Crop</LegendHeading>
    <SearchField>
      Highlight Crop
      <svg width="10" height="10" fill="none" stroke="#777" strokeWidth="1.200"><circle cx="5.800" cy="4" r="2.800" /><path d="M3.800 6 1 9" /></svg>
    </SearchField>
    <LegendHeading $top={12}>Crop</LegendHeading>
    <FilterBox $h={31} $top={1} $w={150}>
      <FilterList>
        <SwatchRow><Swatch $c="#4e79a7" />Null</SwatchRow>
        <SwatchRow><Swatch $c="#a0cbe8" />Arecanut</SwatchRow>
      </FilterList>
      <Track $w={16} $h={31} $bg="#f0f0f0">
        <ArrowBox $w={16} $h={17}><Chevron dir="up" size={8} /></ArrowBox>
        <Thumb $w={15} $h={14} />
      </Track>
    </FilterBox>
  </Legend>
);

/* ---------- bottom bars ---------- */

const BookIcon = () => <path d="M.6.800q3 .2 5.400 1.700Q8.500 1 11.400.8v10Q8.500 10.500 6 12 3.500 10.500.6 10.800zM6 2.500V12M8.500 2v9" />;
const AddMark = () => <path d="M11.500 7.500v8M7.500 11.500h8" strokeWidth="2" stroke="#555" />;

const BottomTabs = () => (
  <SheetTabs>
    <SheetTab $w={131} $pad={9}>
      <svg width="10" height="12"><ellipse cx="4.500" cy="2.500" rx="3.700" ry="1.800" /><path d="M.8 2.500v7q3.700 2.600 7.400 0v-7" /></svg>Data Source
    </SheetTab>
    <SheetTab $w={56} $pad={6}>Sheet 1</SheetTab>
    <SheetTab $w={73} $pad={7}><svg width="12" height="13"><BookIcon /></svg>Story 2</SheetTab>
    <SheetTab $w={57} $pad={5}>Sheet 2</SheetTab>
    <SheetTab $w={102} $pad={7} $active><svg width="12" height="12"><path d="M.6.6h10.800v10.800H.6zM6 .6v10.800M.6 6h10.800" /></svg>Dashboard 1</SheetTab>
    <SheetTab $w={57} $pad={5}>Sheet 4</SheetTab>
    <SheetTab $w={57} $pad={5}>Sheet 5</SheetTab>
    <SheetTab $w={57} $pad={5}>Sheet 6</SheetTab>
    <SheetTab $w={57} $pad={5}>Sheet 7</SheetTab>
    <SheetTab $w={32} $pad={9}><svg width="13" height="13"><path d="M7 10.400H.6V.6h10.800V7M4 8V6M6 8V3.500M8 8V5" /><AddMark /></svg></SheetTab>
    <SheetTab $w={32} $pad={9}><svg width="13" height="13"><path d="M7 10.400H.6V.6h10.800V7M6 .6v9.800M.6 5.500h10.800" /><AddMark /></svg></SheetTab>
    <SheetTab $w={32} $pad={9}><svg width="13" height="13"><path d="M6 11.500Q3.500 10 .6 10.400V.6Q3.500.8 6 2.200 8.500.8 11.400.6V7M6 2.200v9.300" /><AddMark /></svg></SheetTab>
  </SheetTabs>
);

const Status = () => (
  <StatusBar>
    <StatusCell $w={127} $pad={6}>
      <svg width="20" height="14" fill="none" stroke="#666" strokeWidth="1.100"><circle cx="5" cy="3.200" r="2.600" /><path d="M.6 12.400V10q0-2.500 4.400-2.500T9.600 10v2.400z" /></svg>
      UMESH A
      <StatusCaret />
    </StatusCell>
    <StatusCell $w={27} />
    <StatusCell $w={27} />
    <StatusCell $w={47} $pad={14}>
      <svg width="16" height="14" fill="none" stroke="#666" strokeWidth="1.100"><ellipse cx="4.500" cy="2.500" rx="3.700" ry="1.700" /><path d="M.8 2.500V10q1 1.500 4 1.500M8.200 2.500V6" /><path d="m6 8 4 4.500M10 8l-4 4.500" stroke="#333" strokeWidth="1.400" /></svg>
      1
    </StatusCell>
    <StatusCell $w={71} $pad={8}>
      <svg width="56" height="8" fill="#b4b4b4"><path d="M0 1h1.500v7H0zM6.500 1v7L2 4.500zM21 1v7l-5-3.500zM32 1v7l5-3.500zM47.500 1v7L52 4.500zM53 1h1.500v7H53z" /></svg>
    </StatusCell>
    <StatusCell $w={68} $pad={8}>
      <svg width="55" height="11" fill="#b9b9b9">
        <path d="M0 0h3v3H0zM4 0h3v3H4zM8 0h3v3H8zM0 4h3v3H0zM4 4h3v3H4zM8 4h3v3H8zM0 8h3v3H0zM4 8h3v3H4zM8 8h3v3H8zM21 0h11v7H21zM21 8h3v3h-3zM25 8h3v3h-3zM29 8h3v3h-3z" />
        <path fill="#666" d="M42 0h11v11H42z" />
      </svg>
    </StatusCell>
  </StatusBar>
);

const WindowsBar = () => (
  <Taskbar>
    <StartButton>
      <svg width="16" height="16" fill="#fff"><path d="M0 2.300 6.800 1.300v6.300H0zM7.600 1.200 16 0v7.600H7.600zM0 8.400h6.800v6.400L0 13.800zM7.600 8.400H16V16l-8.400-1.200z" /></svg>
    </StartButton>
    <SearchBox>
      <SearchRing />Type here to search<Filler />
      <svg width="12" height="17" fill="none" stroke="#333" strokeWidth="1.200"><rect x="3.500" y=".6" width="5" height="11" rx="1.500" /><path d="M1 8.500v3q0 2.500 2.500 2.500h5q2.500 0 2.500-2.500v-3M6 14v2.500M3.500 16.400h5" /></svg>
    </SearchBox>
    <TaskButton $w={48}>
      <svg width="17" height="16" fill="none" stroke="#fff" strokeWidth="1.200"><path d="M.6 0v2.500h10.800V0M.6 5h10.800v6H.6zM.6 16v-2.500h10.800V16M15 0v3.500M15 8v8" /><path fill="#fff" stroke="none" d="M13.500 4h3v3.500h-3z" /></svg>
    </TaskButton>
    <TaskButton $w={54}>
      <svg width="24" height="24"><path fill="#0c8484" d="M0 0h24v24H0z" /><path fill="#fff" d="m5 3 3.300 1.200v12.300l4-2.300-1.700-.8-1.400-3.600 9.300 3.300v3.800L8.300 21.500 5 19.500z" /></svg>
    </TaskButton>
    <RunningButton $w={46}>
      <svg width="22" height="20"><path fill="#e8b93c" d="M0 1h8l2 2h11v15H0z" /><path fill="#ffe292" d="M0 5h22v13H0z" /><path fill="#39a9e0" d="M4 19v-8q0-1 1-1h12q1 0 1 1v8h-4v-4H8v4z" /></svg>
    </RunningButton>
    <TaskButton $w={50}>
      <svg width="20" height="21" viewBox="0 0 20 21"><path fill="#0b78d7" d="M0 9.500Q1.500 0 10.500 0 20 .5 20 10v2.500H6.500q.7 4.500 6 4.500 3.500 0 6.500-1.700v4Q16 21 12 21 3 21 2.500 13 2.500 8 8 5.500 6.500 7 6.500 8.500H14Q14 4.500 9.500 4.500 4 5 0 9.500z" /></svg>
    </TaskButton>
    <TaskButton $w={48}>
      <svg width="24" height="24"><path fill="none" stroke="#fff" strokeWidth="1.300" d="M8 8V5q0-4 4-4t4 4v3" /><path fill="#fff" d="M0.500 6h23v16q0 1.500-1.500 1.500H2Q.5 23.500.5 22z" /><path fill="#f25022" d="M6 9h5.500v5.500H6z" /><path fill="#7fba00" d="M12.500 9H18v5.500h-5.500z" /><path fill="#00a4ef" d="M6 15.500h5.500V21H6z" /><path fill="#ffb900" d="M12.500 15.500H18V21h-5.500z" /></svg>
    </TaskButton>
    <TaskButton $w={50}>
      <svg width="24" height="19"><path fill="#fff" d="M0 6 12 0l12 6v13H0z" /><path fill="#14190e" d="m2 6 20 .5-9.500 5.500zM12.500 12l6 4-9-2.500z" /></svg>
    </TaskButton>
    <TaskButton $w={49}>
      <svg width="22" height="22"><path fill="#14190e" stroke="#fff" strokeWidth="1.300" d="M.7.7h20.600v20.600H.7z" /><path fill="#fff" d="M1 17 8.500 7l5 7 2-4 5.500 7v4H1z" /></svg>
    </TaskButton>
    <TaskButton $w={48}>
      <svg width="22" height="20"><path fill="#d0100c" d="M0 0h22v20H0z" /><path fill="none" stroke="#fff" strokeWidth="1.400" d="M10 4q1.500-1.500 1.700.5T9.500 10Q7 15 5 16.500T5 14t7-2.500 6 1.500-3 .2T11 8.500 10 4z" /></svg>
    </TaskButton>
    <TaskButton $w={50}>
      <svg width="24" height="22"><path fill="#d9e6e8" d="M7 0 20 2l3 16-4 3L1 17z" /><path fill="#6cb6c3" d="M7.500 1.500 19 3l-4 17L1 15.500z" /><path fill="#b5dce2" d="M8 3l7 1-4 8-7-1z" /><path fill="#2f6f7c" d="m19 4 3 13.500-6 2.500z" /></svg>
    </TaskButton>
    <TaskButton $w={48} $active>
      <svg width="22" height="22"><path fill="#f4f6f7" d="M0 0h22v22H0z" /><g transform="translate(2 2)"><TableauMark size={18} color="#2d7fae" /></g></svg>
    </TaskButton>
    <Tray>
      <TrayItem $w={36}>
        <svg width="15" height="16" fill="none" stroke="#fff" strokeWidth="1.200"><circle cx="10" cy="3.500" r="2.700" /><path d="M6.500 9q3.500-4.500 7.500.5" /><circle cx="5" cy="9" r="2.300" /><path d="M1 15q4-6.500 8 0" /></svg>
      </TrayItem>
      <TrayItem $w={36}><svg width="12" height="7" fill="none" stroke="#fff" strokeWidth="1.300"><path d="M.6 6.500 6 1l5.400 5.500" /></svg></TrayItem>
      <TrayItem $w={14}>
        <svg width="13" height="13" fill="none" stroke="#fff" strokeWidth="1.100"><path d="M.6 12Q1 2 12.500 1M4 12.500Q4 5.500 12.500 4.500M7 12.500q.5-4.500 5.500-4.500" /><circle cx="11" cy="11.500" r="1.400" fill="#fff" stroke="none" /></svg>
      </TrayItem>
      <TrayItem $w={32}>
        <svg width="16" height="14"><path fill="none" stroke="#fff" strokeWidth="1.100" d="M.6 2.600h12.800v7H.6z" /><path fill="#fff" d="M2 4h5v4.500H2zM14 4.500h1.500v3H14z" /><circle cx="11" cy="9" r="4.500" fill="#1a9a3a" /><path stroke="#fff" d="M11 6.500V12M9.500 8h3" /></svg>
      </TrayItem>
      <TrayItem $w={16}>
        <svg width="17" height="14" fill="none" stroke="#fff" strokeWidth="1.100"><path d="M.6 4.600H3L6 1.500v11L3 9.500H.6zM8.500 5q1.500 2 0 4M10.800 3q3 4 0 8M13 1.500q4 5.500 0 11" /></svg>
      </TrayItem>
      <TrayItem $w={7} />
      <Lang>ENG</Lang>
      <Clock>13:25<br />19-10-2023</Clock>
      <TrayItem $w={2} />
      <TrayItem $w={26}><svg width="17" height="17" fill="none" stroke="#fff" strokeWidth="1.300"><path d="M.7 1h15.600v12h-5L8.500 16l-3-3H.7z" /></svg></TrayItem>
      <TrayItem $w={16} />
      <PeekEdge />
    </Tray>
  </Taskbar>
);

export default function App() {
  return (
    <Window>
      <Global />
      <TitleBar>
        <AppIcon><TableauMark size={14} color="#2d7fae" /></AppIcon>
        <TitleText>Tableau - INDIAN AGRICULTURAL RESEARCH ANALYSIS SHEET BOOK DASHBOARD - Tableau license expires in 11 days</TitleText>
        <Caption>
          <svg width="12" height="12"><path d="M1 6.500h10" stroke="#000" /></svg>
          <svg width="12" height="12" fill="none" stroke="#000"><path d="M1.500 3.500h7v7h-7zM3.500 3.500v-2h7v7h-2" /></svg>
          <svg width="12" height="12" stroke="#000" strokeWidth="1.100"><path d="m1 1 10 10M11 1 1 11" /></svg>
        </Caption>
      </TitleBar>
      <MenuBar>
        {([["File", 34], ["Data", 40], ["Worksheet", 72], ["Dashboard", 73], ["Story", 43], ["Analysis", 59], ["Map", 40], ["Format", 54], ["Server", 48], ["Window", 60], ["Help", 40]] as [string, number][]).map(
          ([t, w]) => <MenuItem key={t} $w={w}>{t}</MenuItem>
        )}
      </MenuBar>
      <Toolbar />
      <Main>
        <SidePane />
        <Canvas>
          <Zones>
            <ZoneRow $top={16} $gap={8} $h={244}>
              <Zone $w={380}><ZoneTitle $c="#8cd17d">AREA VS PRODUCTION</ZoneTitle><AreaProduction /></Zone>
              <Zone $w={236}><ZoneTitle $c="#e15759">CROP (PLANTATION<br />BY COUNT)</ZoneTitle><WordCloud /></Zone>
            </ZoneRow>
            <ZoneRow $top={0} $gap={18} $h={349}>
              <Zone $w={186} $lead={10}><ZoneTitle $c="#d37295">SEASON BASED<br />CULTIVATION<br />AREA</ZoneTitle><SeasonArea /></Zone>
              <Zone $w={190} $lead={10}><ZoneTitle $c="#e15759">CROP<br />PLANTATION BY<br />AREA</ZoneTitle><CropBubbles /></Zone>
              <Zone $w={355}>
                <ZoneTitle $c="#333">STATEWISE AGRICULTURAL<br />LAND</ZoneTitle>
                <StateMap />
                <YieldTitle>YIELD BY SEASON</YieldTitle>
                <YieldChart />
              </Zone>
            </ZoneRow>
          </Zones>
          <LegendPane />
        </Canvas>
        <Beyond />
        <Track $w={16} $bg="#f0f0f0">
          <ArrowBox $w={16} $h={17}><Chevron dir="up" size={8} /></ArrowBox>
          <Thumb $w={15} $h={413} />
          <ArrowBox $w={16} $h={17} $bottom><Chevron dir="down" size={8} /></ArrowBox>
        </Track>
      </Main>
      <BottomTabs />
      <Status />
      <WindowsBar />
    </Window>
  );
}
